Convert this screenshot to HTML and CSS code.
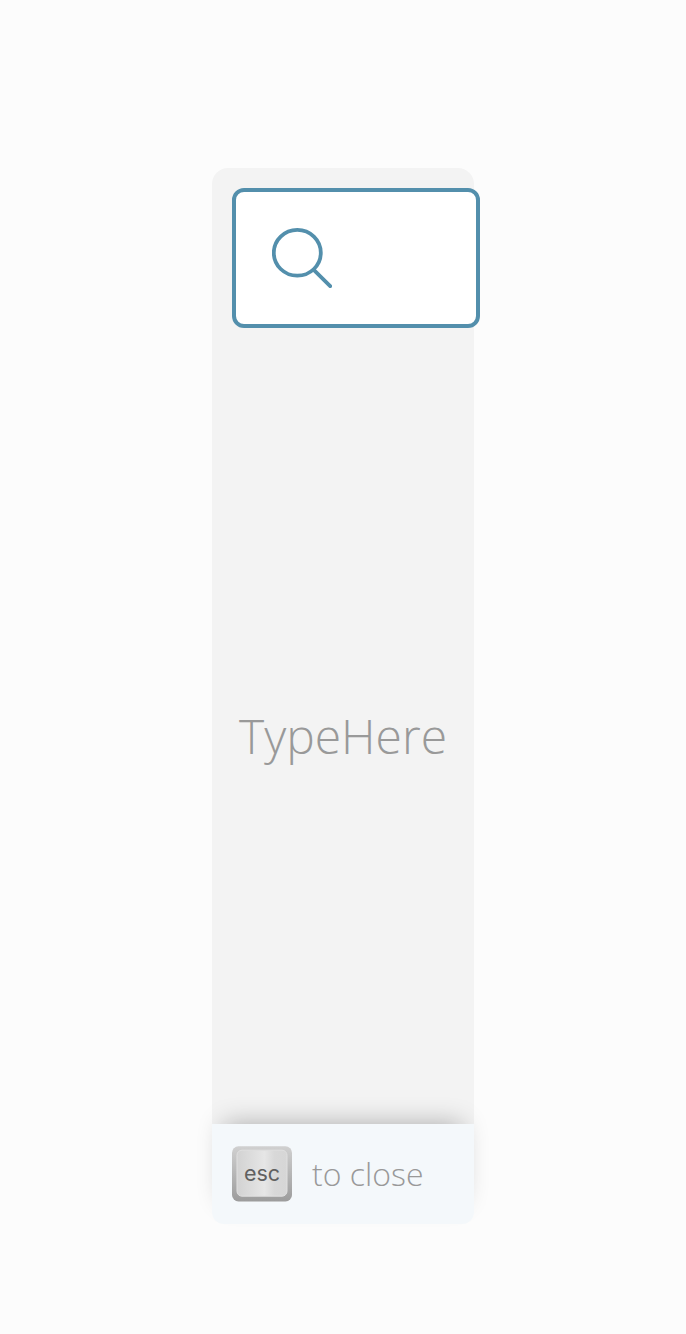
FILE: index.html
```html
<!DOCTYPE html>
<html lang="en">
<head>
<meta charset="utf-8">
<title>Search</title>
<link rel="stylesheet" href="styles.css">
</head>
<body>
<main class="modal">
  <div class="search-box">
    <svg class="search-icon" viewBox="0 0 60 60" fill="none" stroke="currentColor" stroke-width="3.8" stroke-linecap="round">
      <ellipse cx="25.3" cy="24.8" rx="23.5" ry="22.9"/>
      <path d="M42 42.2L58.2 58.2"/>
    </svg>
  </div>
  <div class="hint">TypeHere</div>
  <footer class="footer">
    <svg class="key" viewBox="0 0 60 56">
      <defs>
        <linearGradient id="rim" x1="0" y1="0" x2="0" y2="1">
          <stop offset="0" stop-color="#d0d0d0"/>
          <stop offset="1" stop-color="#9c9c9c"/>
        </linearGradient>
        <linearGradient id="cap">
          <stop offset="0" stop-color="#d2d2d2"/>
          <stop offset=".55" stop-color="#e6e6e6"/>
          <stop offset=".75" stop-color="#d8d8d8"/>
          <stop offset="1" stop-color="#d6d6d6"/>
        </linearGradient>
      </defs>
      <rect x="0" y="0.3" width="60" height="55.2" rx="6.5" fill="url(#rim)"/>
      <rect x="5" y="4.2" width="50" height="46" rx="5" fill="url(#cap)" stroke="#e0e0e0"/>
      <text class="key-label" x="30" y="35" text-anchor="middle">esc</text>
    </svg>
    <span class="close-text">to close</span>
  </footer>
</main>
</body>
</html>
```
FILE: styles.css
```css
body {
  display: flow-root;
  box-sizing: border-box;
  height: 1334px;
  margin: 0;
  padding-top: 168px;
  background: #fcfcfc;
  font-family: "Open Sans", sans-serif;
  font-weight: 300;
}

.modal {
  display: flex;
  flex-direction: column;
  box-sizing: border-box;
  width: 262px;
  height: 1056px;
  margin: 0 auto;
  padding-top: 20px;
  border-radius: 16px;
  background: #f3f3f3;
}

.search-box {
  display: flex;
  align-items: center;
  box-sizing: border-box;
  flex: none;
  width: 248px;
  height: 140px;
  margin-left: 20px;
  padding-left: 36px;
  border: 4px solid #538fac;
  border-radius: 12px;
  background: #fff;
  color: #538fac;
}

.search-icon {
  width: 60px;
  height: 60px;
}

.hint {
  flex: 1;
  display: flex;
  align-items: center;
  justify-content: center;
  padding-top: 19px;
  font-size: 48px;
  color: #999;
}

.footer {
  display: flex;
  align-items: center;
  box-sizing: border-box;
  flex: none;
  height: 100px;
  padding-left: 20px;
  gap: 20px;
  border-radius: 0 0 12px 12px;
  background: #f4f8fb;
  box-shadow: 0 -12px 24px -12px rgba(0, 0, 0, .3);
}

.key {
  width: 60px;
  height: 56px;
}

.key-label {
  font: 400 21.5px Inter, sans-serif;
  fill: #606060;
}

.close-text {
  padding-bottom: 2px;
  font-size: 32px;
  color: #999;
}
```
